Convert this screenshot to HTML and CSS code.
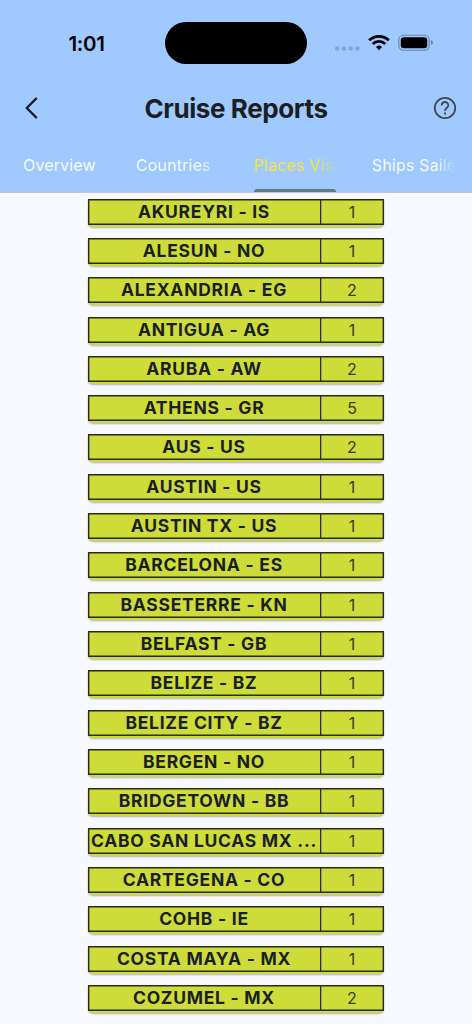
FILE: index.html
```html
<!DOCTYPE html>
<html lang="en">
<head>
<meta charset="utf-8">
<title>Cruise Reports</title>
<link rel="stylesheet" href="styles.css">
</head>
<body>
<header class="header">
  <div class="status">
    <div class="clock">1:01</div>
    <div class="island"></div>
    <div class="indicators">
      <svg width="100" height="20" viewBox="0 0 100 20">
        <g fill="#83a5d1"><rect x="1" y="13.4" width="4.2" height="4.2" rx="1.5"/><rect x="7.8" y="13.4" width="4.2" height="4.2" rx="1.5"/><rect x="14.6" y="13.4" width="4.2" height="4.2" rx="1.5"/><rect x="21.4" y="13.4" width="4.2" height="4.2" rx="1.5"/></g>
        <g fill="none" stroke="#000" stroke-width="2.8"><path d="M35.2 7.3A14 14 0 0 1 54.8 7.3"/><path d="M38.7 10.9A9.1 9.1 0 0 1 51.3 10.9"/></g>
        <path d="M45 17.2L42 14A4.4 4.4 0 0 1 48 14Z"/>
        <rect x="64.8" y="2.3" width="30.4" height="14.9" rx="4.6" fill="none" stroke="#6884a8" stroke-width="1.1"/>
        <rect x="66.8" y="4.2" width="26.4" height="11" rx="3"/>
        <path d="M96.8 7.3Q99 7.8 99 9.7T96.8 12.1Z" fill="#6884a8"/>
      </svg>
    </div>
  </div>
  <div class="titlebar">
    <svg class="back" width="16" height="24" viewBox="0 0 16 24"><path d="M13.1 2.7L3.7 12L13.1 21.3" fill="none" stroke="#1b1f24" stroke-width="2.4" stroke-linecap="round" stroke-linejoin="round"/></svg>
    <h1 class="title">Cruise Reports</h1>
    <svg class="help" width="24" height="24" viewBox="0 0 24 24"><circle cx="12" cy="12" r="10.2" fill="none" stroke="#42484f" stroke-width="1.8"/><path d="M8.7 9.6C8.7 4.8 15.3 4.9 15.3 9.4C15.3 11.7 12 12 12 15" fill="none" stroke="#42484f" stroke-width="1.8"/><rect x="11" y="16.5" width="2" height="2" fill="#42484f"/></svg>
  </div>
  <nav class="tabs">
    <div class="tab"><span class="label">Overview</span></div>
    <div class="tab"><span class="label fade">Countries</span></div>
    <div class="tab active"><span class="label fade">Places Visited</span></div>
    <div class="tab"><span class="label fade">Ships Sailed</span></div>
  </nav>
</header>
<main class="list">
  <div class="row"><div class="cells"><b class="place">AKUREYRI - IS</b><span class="count">1</span></div></div>
  <div class="row"><div class="cells"><b class="place">ALESUN - NO</b><span class="count">1</span></div></div>
  <div class="row"><div class="cells"><b class="place">ALEXANDRIA - EG</b><span class="count">2</span></div></div>
  <div class="row"><div class="cells"><b class="place">ANTIGUA - AG</b><span class="count">1</span></div></div>
  <div class="row"><div class="cells"><b class="place">ARUBA - AW</b><span class="count">2</span></div></div>
  <div class="row"><div class="cells"><b class="place">ATHENS - GR</b><span class="count">5</span></div></div>
  <div class="row"><div class="cells"><b class="place">AUS - US</b><span class="count">2</span></div></div>
  <div class="row"><div class="cells"><b class="place">AUSTIN - US</b><span class="count">1</span></div></div>
  <div class="row"><div class="cells"><b class="place">AUSTIN TX - US</b><span class="count">1</span></div></div>
  <div class="row"><div class="cells"><b class="place">BARCELONA - ES</b><span class="count">1</span></div></div>
  <div class="row"><div class="cells"><b class="place">BASSETERRE - KN</b><span class="count">1</span></div></div>
  <div class="row"><div class="cells"><b class="place">BELFAST - GB</b><span class="count">1</span></div></div>
  <div class="row"><div class="cells"><b class="place">BELIZE - BZ</b><span class="count">1</span></div></div>
  <div class="row"><div class="cells"><b class="place">BELIZE CITY - BZ</b><span class="count">1</span></div></div>
  <div class="row"><div class="cells"><b class="place">BERGEN - NO</b><span class="count">1</span></div></div>
  <div class="row"><div class="cells"><b class="place">BRIDGETOWN - BB</b><span class="count">1</span></div></div>
  <div class="row"><div class="cells"><b class="place">CABO SAN LUCAS MX ...</b><span class="count">1</span></div></div>
  <div class="row"><div class="cells"><b class="place">CARTEGENA - CO</b><span class="count">1</span></div></div>
  <div class="row"><div class="cells"><b class="place">COHB - IE</b><span class="count">1</span></div></div>
  <div class="row"><div class="cells"><b class="place">COSTA MAYA - MX</b><span class="count">1</span></div></div>
  <div class="row"><div class="cells"><b class="place">COZUMEL - MX</b><span class="count">2</span></div></div>
</main>
</body>
</html>
```
FILE: styles.css
```css
* { box-sizing: border-box; }
body {
  margin: 0;
  width: 472px;
  height: 1024px;
  overflow: hidden;
  background: #f8f9ff;
  font-family: Inter, "Liberation Sans", sans-serif;
  color: #1b1f24;
}
.header {
  height: 193px;
  display: flex;
  flex-direction: column;
  background: #a0c9ff;
  border-bottom: 1px solid #bec6d3;
}
.status {
  height: 86px;
  display: grid;
  grid-template-columns: 165px 142px 165px;
  align-items: center;
}
.clock {
  padding: 1px 0 0 68.5px;
  font-size: 20.5px;
  font-weight: 600;
  line-height: 24px;
  color: #000;
  letter-spacing: -0.3px;
}
.island { height: 42px; border-radius: 21px; background: #000; }
.indicators { padding-left: 27px; height: 20px; margin-bottom: 1px; }
.indicators svg { display: block; }
.titlebar {
  height: 44px;
  display: grid;
  grid-template-columns: 60px 1fr 60px;
  align-items: center;
}
.back { margin-left: 23px; }
.help { margin-left: 21px; }
.title {
  margin: 0;
  padding-top: 2px;
  text-align: center;
  font-size: 26px;
  font-weight: 650;
  line-height: 32px;
  letter-spacing: -0.4px;
}
.tabs {
  height: 62px;
  display: grid;
  grid-template-columns: repeat(4, 118px);
}
.tab {
  display: flex;
  flex-direction: column;
  justify-content: space-between;
  margin: 0 18px;
  padding-top: 25px;
  color: #f6f9ff;
  font-size: 16px;
  line-height: 20px;
  letter-spacing: 0.15px;
}
.tab:first-child { padding-left: 5px; }
.label { display: block; white-space: nowrap; overflow: hidden; }
.fade {
  -webkit-mask-image: linear-gradient(to right, #000 78%, transparent 102%);
  mask-image: linear-gradient(to right, #000 78%, transparent 102%);
}
.active { color: #f9e639; }
.active::after {
  content: "";
  height: 3px;
  border-radius: 3px 3px 0 0;
  background: #5d7c8c;
}
.list {
  display: flex;
  flex-direction: column;
  align-items: center;
  gap: 11.32px;
  padding-top: 5.6px;
}
.row {
  width: 296px;
  height: 28px;
  flex: none;
  background: #cddc39;
  border-radius: 0 0 5px 5px;
  box-shadow: 0 1px 2px rgba(0, 0, 0, .3);
}
.cells {
  height: 26px;
  display: grid;
  grid-template-columns: 1fr 64px;
  box-shadow: inset 0 0 0 1.4px #292c16;
}
.place {
  font-size: 17.5px;
  font-weight: 650;
  line-height: 26px;
  letter-spacing: .72px;
  text-align: center;
  white-space: nowrap;
}
.count {
  box-shadow: inset 1.3px 0 0 #292c16;
  font-size: 16px;
  line-height: 26px;
  text-align: center;
  color: #383d1c;
}
```
